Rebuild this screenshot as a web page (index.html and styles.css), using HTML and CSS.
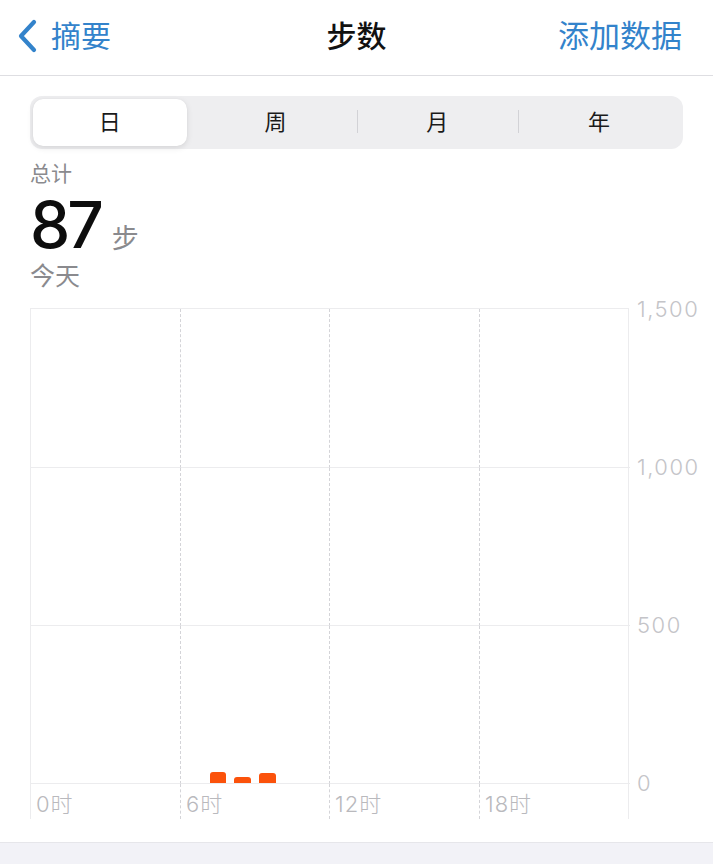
FILE: index.html
```html
<!DOCTYPE html>
<html lang="zh-CN">
<head>
<meta charset="utf-8">
<title>步数</title>
<link rel="stylesheet" href="styles.css">
</head>
<body>
<header class="nav">
  <a class="back">
    <svg class="chev" width="22" height="34" viewBox="0 0 22 34"><polyline points="18,3 5,17 18,31" fill="none" stroke="currentColor" stroke-width="4.2" stroke-linecap="round" stroke-linejoin="round"/></svg>
    <span>摘要</span>
  </a>
  <h1 class="title">步数</h1>
  <a class="add">添加数据</a>
</header>

<main class="content">
  <div class="segments">
    <div class="seg active">日</div>
    <div class="seg">周</div>
    <div class="seg sep">月</div>
    <div class="seg sep">年</div>
  </div>

  <section class="summary">
    <div class="label">总计</div>
    <div class="total"><span class="num">87</span><span class="unit">步</span></div>
    <div class="label day">今天</div>
  </section>

  <section class="chart">
    <div class="plot">
      <div class="cell"></div><div class="cell"></div><div class="cell"></div><div class="cell"></div>
      <div class="cell"></div><div class="cell"></div><div class="cell"></div><div class="cell"></div>
      <div class="cell"></div>
      <div class="cell hours">
        <div class="hour"></div>
        <div class="hour"><div class="bar" style="height:11px"></div></div>
        <div class="hour"><div class="bar" style="height:6px"></div></div>
        <div class="hour"><div class="bar" style="height:10px"></div></div>
        <div class="hour"></div>
        <div class="hour"></div>
      </div>
      <div class="cell"></div><div class="cell"></div>
      <div class="cell xl">0时</div>
      <div class="cell xl">6时</div>
      <div class="cell xl">12时</div>
      <div class="cell xl">18时</div>
    </div>
    <div class="yaxis">
      <div class="yl first">1,500</div>
      <div class="yl">1,000</div>
      <div class="yl">500</div>
      <div class="yl last">0</div>
    </div>
  </section>
</main>

<footer class="foot"></footer>
</body>
</html>
```

FILE: styles.css
```css
* { box-sizing: border-box; }

html, body {
  margin: 0;
  padding: 0;
  background: #ffffff;
}

body {
  width: 713px;
  height: 864px;
  overflow: hidden;
  font-family: "Inter", "Noto Sans CJK SC", sans-serif;
  color: #111111;
  display: flex;
  flex-direction: column;
}

/* ---------- nav bar ---------- */
.nav {
  flex: 0 0 76px;
  height: 76px;
  border-bottom: 1px solid #dedee2;
  display: grid;
  grid-template-columns: 1fr auto 1fr;
  align-items: center;
  padding: 0 16px 4px 16px;
}

.back {
  display: flex;
  align-items: center;
  gap: 13px;
  color: #3383cb;
  font-size: 30px;
  justify-self: start;
}

.chev { display: block; }

.back span { line-height: 1; }

.title {
  margin: 0;
  font-size: 30px;
  font-weight: 500;
  color: #111;
  line-height: 1;
}

.add {
  justify-self: end;
  margin-right: 15px;
  color: #3383cb;
  font-size: 31px;
  line-height: 1;
}

/* ---------- content ---------- */
.content {
  flex: 1 1 auto;
  min-height: 0;
  padding: 20px 0 0 30px;
}

.segments {
  width: 653px;
  height: 53px;
  background: #eeeef0;
  border-radius: 12px;
  padding: 3px;
  display: grid;
  grid-template-columns: repeat(4, 1fr);
}

.seg {
  display: flex;
  align-items: center;
  justify-content: center;
  font-size: 22px;
  color: #1a1a1a;
  position: relative;
  padding-bottom: 5px;
}

.seg.active {
  background: #ffffff;
  border-radius: 10px;
  margin-right: 8px;
  box-shadow: 0 2px 6px rgba(0,0,0,0.10), 0 0 1px rgba(0,0,0,0.08);
}

.seg.sep::before {
  content: "";
  position: absolute;
  left: 0;
  top: 11px;
  bottom: 13px;
  width: 1px;
  background: #d2d2d6;
}

/* ---------- summary ---------- */
.summary {
  padding-top: 10px;
}

.label {
  font-size: 21px;
  color: #8a8a8e;
  line-height: 30px;
}

.total {
  display: flex;
  align-items: baseline;
  height: 62px;
  margin-top: 5px;
}

.num {
  font-size: 64px;
  font-weight: 500;
  letter-spacing: -3px;
  line-height: 62px;
  color: #0d0d0d;
}

.unit {
  font-size: 27px;
  color: #8a8a8e;
  margin-left: 11px;
}

.label.day {
  font-size: 25px;
  line-height: 34px;
  margin-top: 3px;
}

/* ---------- chart ---------- */
.chart {
  margin-top: 15px;
  display: flex;
  align-items: flex-start;
}

.plot {
  flex: 0 0 599px;
  width: 599px;
  display: grid;
  grid-template-columns: 150px 149px 150px 150px;
  grid-template-rows: 159px 158px 158px 35px;
  border-left: 1px solid #ececee;
  border-top: 1px solid #ececee;
  border-right: 1px solid #ececee;
}

.cell {
  border-right: 1px dashed #d4d4d8;
  border-bottom: 1px solid #ececee;
}

.cell:nth-child(4n) { border-right: none; }

.cell.xl {
  border-bottom: none;
  font-size: 22px;
  font-weight: 300;
  letter-spacing: 1px;
  color: #b9b9bd;
  padding: 6px 0 0 5px;
  line-height: 28px;
}

.hours {
  display: grid;
  grid-template-columns: repeat(6, 1fr);
  align-items: end;
}

.hour {
  padding: 0 4px 0 4px;
  display: flex;
  align-items: flex-end;
  height: 100%;
}

.bar {
  width: 100%;
  background: #fb520b;
  border-radius: 3px 3px 0 0;
}

.yaxis {
  padding-left: 8px;
  display: flex;
  flex-direction: column;
}

.yl {
  height: 158px;
  font-size: 22px;
  font-weight: 300;
  letter-spacing: 1.5px;
  line-height: 22px;
  color: #c4c4c8;
}

.yl.first { margin-top: -10px; }
.yl.last { height: 22px; }

/* ---------- footer ---------- */
.foot {
  flex: 0 0 22px;
  height: 22px;
  background: #f2f2f7;
  border-top: 1px solid #e6e6ea;
}
```
